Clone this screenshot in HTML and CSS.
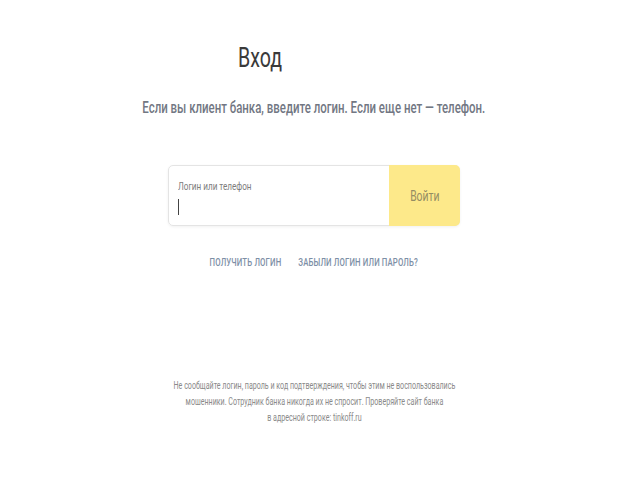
FILE: index.html
```html
<!DOCTYPE html>
<html lang="ru">
<head>
<meta charset="utf-8">
<link rel="stylesheet" href="styles.css">
</head>
<body>
<main class="page">
  <div class="title-row"><h1 class="title"><span class="sq">Вход</span></h1></div>
  <p class="subtitle"><span class="sq">Если вы клиент банка, введите логин. Если еще нет — телефон.</span></p>
  <form class="login">
    <div class="field">
      <span class="label sq">Логин или телефон</span>
      <span class="caret"></span>
    </div>
    <div class="btn"><span class="sq">Войти</span></div>
  </form>
  <div class="links">
    <a class="link">ПОЛУЧИТЬ ЛОГИН</a>
    <a class="link">ЗАБЫЛИ ЛОГИН ИЛИ ПАРОЛЬ?</a>
  </div>
  <p class="notice">
    <span class="sq">Не сообщайте логин, пароль и код подтверждения, чтобы этим не воспользовались</span><br>
    <span class="sq">мошенники. Сотрудник банка никогда их не спросит. Проверяйте сайт банка</span><br>
    <span class="sq">в адресной строке: tinkoff.ru</span>
  </p>
</main>
</body>
</html>
```
FILE: styles.css
```css
* { box-sizing: border-box; }
html, body { margin: 0; padding: 0; background: #fff; }
body { font-family: Roboto, "Noto Sans", sans-serif; color: #333; width: 640px; height: 480px; overflow: hidden; }
.page { display: flex; flex-direction: column; align-items: center; padding-right: 12px; }
.sq { display: inline-block; transform: scaleX(0.74); transform-origin: center; white-space: nowrap; }
.title-row { align-self: stretch; padding-left: 238px; padding-top: 40px; }
.title { margin: 0; font-weight: 400; font-size: 28px; line-height: 36px; color: #3a3a3a; }
.title .sq { transform: scaleX(0.7); transform-origin: left center; }
.subtitle { margin: 22px 0 0; font-size: 16px; line-height: 20px; color: #727783; font-weight: 500; }
.subtitle .sq { transform: scaleX(0.715); }
.login { margin-top: 47px; display: flex; width: 292px; height: 61px; border: 1px solid #e4e4e4; border-radius: 5px; box-shadow: 0 1px 3px rgba(0,0,0,0.06); }
.field { flex: 1; padding: 14px 0 0 9px; display: flex; flex-direction: column; align-items: flex-start; }
.label { font-size: 11px; line-height: 14px; color: #7c7c7c; transform-origin: left center; }
.caret { margin-top: 5px; width: 1px; height: 16px; background: #444; }
.btn { width: 71px; margin: -1px -1px -1px 0; background: #fde98a; border-radius: 0 5px 5px 0; display: flex; align-items: center; justify-content: center; font-size: 14px; color: #948d63; }
.links { margin-top: 30px; display: flex; gap: 23px; transform: scaleX(0.74); }
.link { font-size: 10.5px; line-height: 14px; color: #7d8fa6; font-weight: 500; letter-spacing: 0.2px; white-space: nowrap; }
.notice { margin: 108px 0 0; text-align: center; font-size: 10px; line-height: 16px; color: #8a8a8a; }
.notice .sq { transform: scaleX(0.71); }
```
